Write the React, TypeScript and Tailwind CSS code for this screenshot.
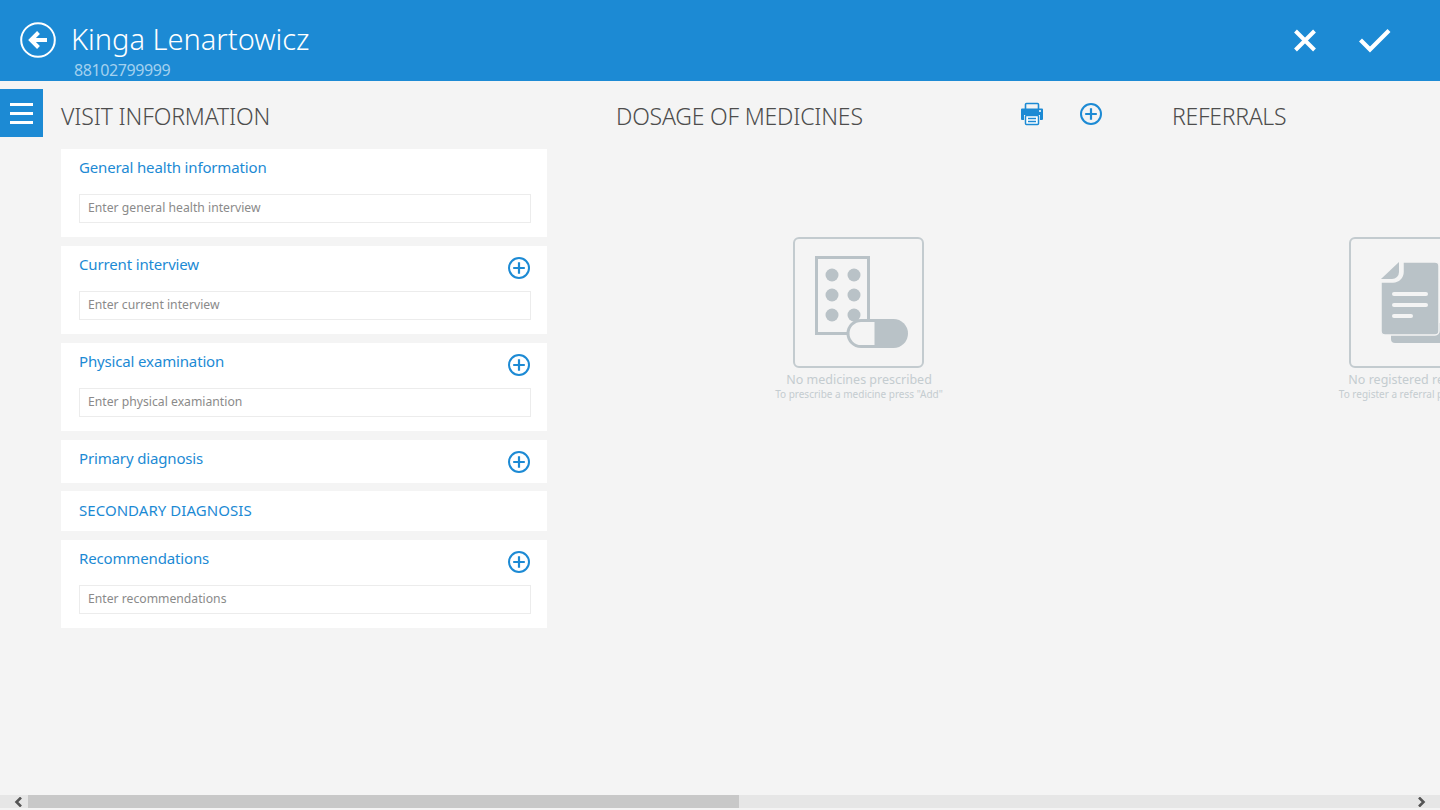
const font = "font-['Noto_Sans','Open_Sans',sans-serif]";

function Plus({ size = 24 }: { size?: number }) {
  return (
    <svg width={size} height={size} viewBox="0 0 24 24" fill="none" stroke="#1c8ad4" strokeWidth="2">
      <circle cx="12" cy="12" r="10" />
      <path d="M12 6.200v11.600M6.200 12h11.600" strokeWidth="2.200" />
    </svg>
  );
}

function Card({ title, placeholder, plus, upper }: { title: string; placeholder?: string; plus?: boolean; upper?: boolean }) {
  return (
    <div className={`bg-white pl-[18px] pr-[16px] ${placeholder ? "h-[88px]" : upper ? "h-[40px]" : "h-[43px]"}`}>
      <div className={`flex justify-between ${upper ? "pt-[8px]" : "pt-[7px]"}`}>
        <span className={`text-[15px] leading-[22px] text-[#1c8ad4] ${upper ? "tracking-[0.05px]" : "tracking-[-0.15px]"}`}>{title}</span>
        {plus && <span className="mt-[3px]"><Plus /></span>}
      </div>
      {placeholder && (
        <div className={`${plus ? "mt-[11px]" : "mt-[16px]"} h-[29px] border border-[#ececec] px-[8px] text-[12.2px] leading-[26px] text-[#8a8a8a]`}>
          {placeholder}
        </div>
      )}
    </div>
  );
}

function Empty({ title, sub, children }: { title: string; sub: string; children: React.ReactNode }) {
  return (
    <div className="mt-[105px] pr-[2px] flex flex-col items-center">
      <div className="mr-[2px] w-[131px] h-[131px] shrink-0 rounded-[6px] border-2 border-[#c3cbcf] overflow-hidden">{children}</div>
      <div className="mt-[3px] whitespace-nowrap text-[12.5px] leading-[17px] text-[#c4ccd0]">{title}</div>
      <div className="whitespace-nowrap text-[10px] leading-[12px] text-[#c4ccd0]">{sub}</div>
    </div>
  );
}

export default function App() {
  return (
    <div className={`h-[810px] w-[1440px] overflow-hidden flex flex-col bg-[#f4f4f4] ${font}`}>
      <header className="h-[81px] shrink-0 bg-[#1c8ad4] flex items-start text-white">
        <svg className="ml-[20px] mt-[22px]" width="36" height="36" viewBox="0 0 36 36" fill="none">
          <circle cx="18" cy="18" r="16.800" stroke="#fff" strokeWidth="2" />
          <path d="M27 18H12M18.500 10.500 11 18l7.500 7.500" stroke="#fff" strokeWidth="4" />
        </svg>
        <div className="ml-[15px] mt-[20px]">
          <div className="text-[29px] leading-[38px] font-light">Kinga Lenartowicz</div>
          <div className="ml-[3px] text-[16px] leading-[20px] mt-[2px] text-[#a3d1ef] tracking-[-0.4px]">88102799999</div>
        </div>
        <div className="ml-auto flex items-center mt-[27px] mr-[48px]">
          <svg width="24" height="24" viewBox="0 0 24 24"><path d="M2.500 3 21.500 22M21.500 3 2.500 22" stroke="#fff" strokeWidth="4" /></svg>
          <svg className="ml-[41px]" width="34" height="26" viewBox="0 0 34 26"><path d="M2.500 13l9.500 9.500L31 3.500" fill="none" stroke="#fff" strokeWidth="4.200" /></svg>
        </div>
      </header>

      <main className="flex-1 flex min-h-0 overflow-hidden">
        <button className="mt-[8px] w-[43px] h-[48px] shrink-0 bg-[#1c8ad4] flex flex-col items-center justify-center gap-[6px]">
          <span className="block w-[23px] h-[3px] bg-white" />
          <span className="block w-[23px] h-[3px] bg-white" />
          <span className="block w-[23px] h-[3px] bg-white" />
        </button>

        <section className="ml-[18px] w-[486px] shrink-0">
          <h2 className="mt-[19px] text-[23px] leading-[32px] text-[#4d4d4d] font-light tracking-[-0.15px]">VISIT INFORMATION</h2>
          <div className="mt-[17px] flex flex-col gap-[9px]">
            <Card title="General health information" placeholder="Enter general health interview" />
            <Card title="Current interview" placeholder="Enter current interview" plus />
            <Card title="Physical examination" placeholder="Enter physical examiantion" plus />
            <div className="flex flex-col gap-[8px]">
              <Card title="Primary diagnosis" plus />
              <Card title="SECONDARY DIAGNOSIS" upper />
            </div>
            <Card title="Recommendations" placeholder="Enter recommendations" plus />
          </div>
        </section>

        <section className="ml-[70px] w-[486px] shrink-0">
          <div className="mt-[19px] flex items-center h-[32px] -ml-px">
            <h2 className="text-[23px] leading-[32px] text-[#4d4d4d] font-light tracking-[-0.2px]">DOSAGE OF MEDICINES</h2>
            <svg className="ml-auto -mt-[4px]" width="24" height="24" viewBox="0 0 24 24">
              <path d="M5.500 7V2.500a1 1 0 0 1 1-1h11a1 1 0 0 1 1 1V7" fill="none" stroke="#1c8ad4" strokeWidth="1.600" />
              <path d="M2 6.500h20a1 1 0 0 1 1 1V17a1 1 0 0 1-1 1h-2v-5H4v5H2a1 1 0 0 1-1-1V7.500a1 1 0 0 1 1-1z" fill="#1c8ad4" />
              <rect x="5.500" y="13.500" width="13" height="9" rx="1" fill="#fff" stroke="#1c8ad4" strokeWidth="1.500" />
              <path d="M8 16.500h8M8 19.500h8" stroke="#1c8ad4" strokeWidth="1.500" />
              <circle cx="20" cy="9" r="1" fill="#fff" />
            </svg>
            <span className="ml-[35px] -mt-[4px]"><Plus /></span>
          </div>
          <Empty title="No medicines prescribed" sub={'To prescribe a medicine press "Add"'}>
            <svg width="127" height="127" viewBox="0 0 127 127">
              <rect x="21.500" y="18.500" width="52" height="76" fill="none" stroke="#b9c2c7" strokeWidth="3" />
              {[[37, 36], [59, 36], [37, 56], [59, 56], [37, 76], [59, 76]].map(([x, y]) => (
                <circle key={`${x}-${y}`} cx={x} cy={y} r="6.500" fill="#b9c2c7" />
              ))}
              <path d="M81 80h17.500a14.500 14.500 0 0 1 0 29H81z" fill="#b9c2c7" />
              <path d="M81 81.500H66a13 13 0 0 0 0 26h15z" fill="#f4f4f4" stroke="#b9c2c7" strokeWidth="3" />
            </svg>
          </Empty>
        </section>

        <section className="ml-[70px] w-[486px] shrink-0">
          <h2 className="mt-[19px] -ml-px text-[23px] leading-[32px] text-[#4d4d4d] font-light tracking-[-0.3px]">REFERRALS</h2>
          <Empty title="No registered referrals" sub={'To register a referral press "Add"'}>
            <svg width="127" height="127" viewBox="0 0 127 127">
              <rect x="40" y="84" width="60" height="20" rx="4" fill="#b9c2c7" />
              <path d="M52 23h32a4 4 0 0 1 4 4v65a4 4 0 0 1-4 4H34a4 4 0 0 1-4-4V43h12a10 10 0 0 0 10-10z" fill="#b9c2c7" stroke="#f4f4f4" strokeWidth="1.500" />
              <path d="M30 40 48 23v10a7 7 0 0 1-7 7z" fill="#b9c2c7" />
              <path d="M43 55h32M43 66h32M43 77h17" stroke="#f4f4f4" strokeWidth="4" strokeLinecap="round" />
            </svg>
          </Empty>
        </section>
      </main>

      <div className="h-[13px] shrink-0 bg-[#e6e6e6] flex items-center relative mb-[2px]">
        <svg className="ml-[14px]" width="9" height="10" viewBox="0 0 9 10"><path d="M7 .500 2.500 5 7 9.500" fill="none" stroke="#555" strokeWidth="2.600" /></svg>
        <div className="ml-[5px] w-[711px] h-[13px] bg-[#c8c8c8]" />
        <svg className="ml-auto mr-[14px]" width="9" height="10" viewBox="0 0 9 10"><path d="M2 .500 6.500 5 2 9.500" fill="none" stroke="#555" strokeWidth="2.600" /></svg>
      </div>
    </div>
  );
}
